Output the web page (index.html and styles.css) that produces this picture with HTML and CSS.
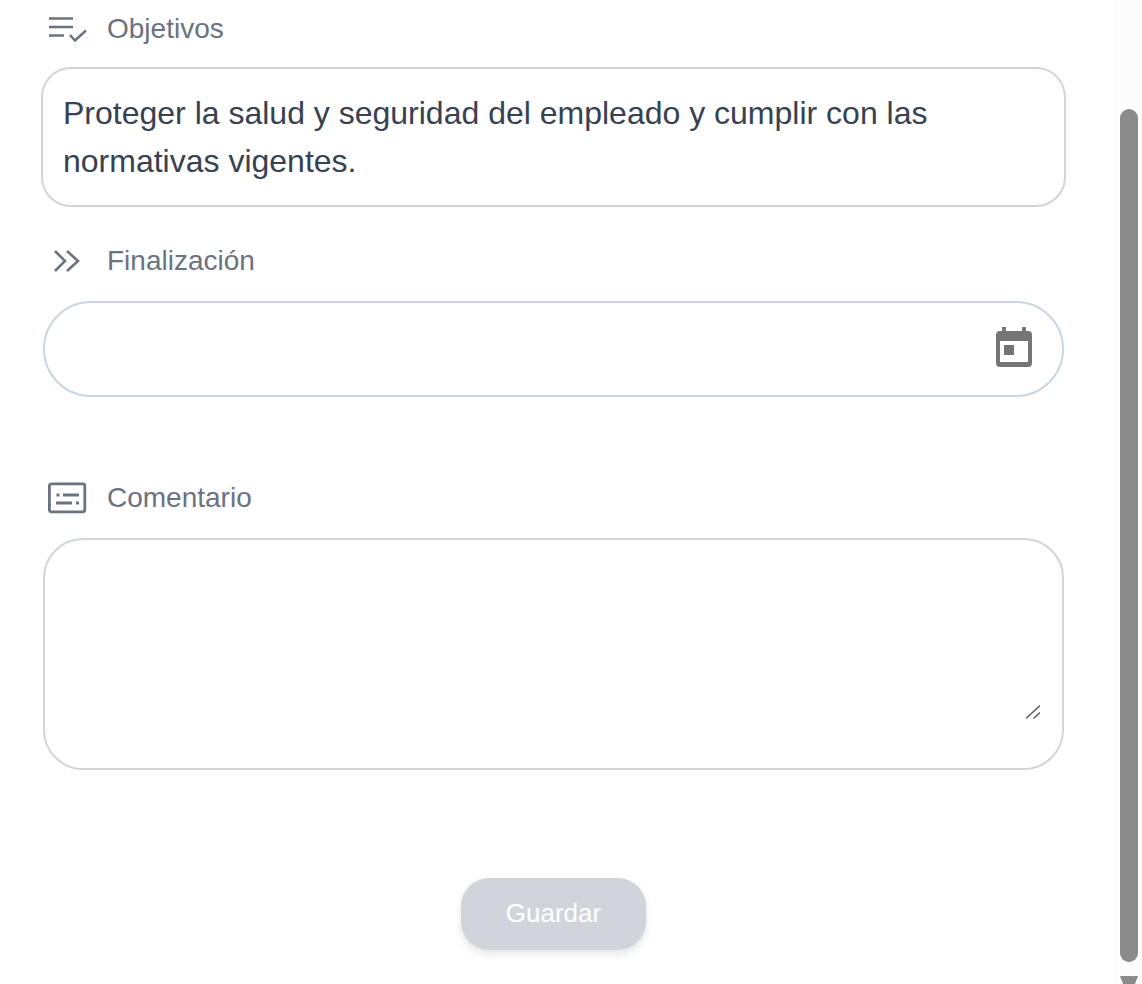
FILE: index.html
```html
<!DOCTYPE html>
<html lang="es">
<head>
    <meta charset="UTF-8">
    <meta name="viewport" content="width=device-width, initial-scale=1.0">
    <title>Objetivos</title>
    <link rel="stylesheet" href="styles.css">
</head>
<body>
    <div class="page">
        <form class="form">
            <div class="form-label label-objetivos">
                <svg class="label-icon" width="40" height="44" viewBox="0 0 40 44" fill="none" stroke="#6b7280" stroke-width="2.6">
                    <path d="M1 11.5H25M1 20H25M1 28.5H16"/>
                    <path d="M22 28L27 33.5L38 23.5"/>
                </svg>
                <span>Objetivos</span>
            </div>
            <textarea class="objetivos-box" rows="2" readonly>Proteger la salud y seguridad del empleado y cumplir con las normativas vigentes.</textarea>

            <div class="form-label label-finalizacion">
                <svg class="label-icon" width="40" height="30" viewBox="0 0 40 30" fill="none" stroke="#6b7280" stroke-width="2.6">
                    <path d="M7 5L17 15L7 25"/>
                    <path d="M19 5L30 15L19 25"/>
                </svg>
                <span>Finalización</span>
            </div>
            <div class="date-box">
                <input class="date-input" type="text">
                <svg class="date-icon" width="36" height="40" viewBox="0 0 36 40">
                    <path fill="#757575" fill-rule="evenodd" d="M6 0H10V4H26V0H30V4H32A4 4 0 0 1 36 8V36A4 4 0 0 1 32 40H4A4 4 0 0 1 0 36V8A4 4 0 0 1 4 4H6ZM4 14V35H32V14ZM8 18H18V28H8Z"/>
                </svg>
            </div>

            <div class="form-label label-comentario">
                <svg class="label-icon" width="40" height="34" viewBox="0 0 40 34" fill="none" stroke="#6b7280" stroke-width="2.8">
                    <rect x="1.4" y="2.8" width="35.4" height="28" rx="2"/>
                    <path d="M8.5 14H11.5M15 14H31M8 22H24M28 22H31"/>
                </svg>
                <span>Comentario</span>
            </div>
            <div class="comment-box">
                <textarea class="comment-input"></textarea>
                <svg class="comment-grip" width="14" height="14" viewBox="0 0 14 14" fill="none" stroke="#555" stroke-width="1.3">
                    <path d="M0 13.5L14 0.5M7.5 13.5L14 7.5"/>
                </svg>
            </div>

            <div class="form-actions">
                <button type="button" class="save-btn">Guardar</button>
            </div>
        </form>

        <div class="scrollbar">
            <div class="scrollbar-thumb"></div>
            <div class="scrollbar-arrow"></div>
        </div>
    </div>
</body>
</html>
```

FILE: styles.css
```css
* {
    margin: 0;
    padding: 0;
    box-sizing: border-box;
    font-family: "Liberation Sans", Arial, sans-serif;
}

html, body {
    height: 100%;
    overflow: hidden;
    background: white;
}

.page {
    display: flex;
    height: 984px;
}

.form {
    flex: 1;
    padding-left: 43px;
}

.form-label {
    display: flex;
    align-items: center;
    gap: 19px;
    padding-left: 5px;
    color: #6b7280;
    font-size: 28px;
}

.label-icon {
    flex: none;
}

.label-objetivos {
    height: 58px;
    margin-bottom: 9px;
}

.label-finalizacion {
    height: 30px;
    margin-top: 39px;
    margin-bottom: 25px;
}

.label-comentario {
    height: 36px;
    margin-top: 83px;
    margin-bottom: 22px;
}

.objetivos-box {
    display: block;
    width: 1025px;
    height: 140px;
    margin-left: -2px;
    padding: 20px 20px;
    border: 2px solid #d1d5db;
    border-radius: 30px;
    outline: none;
    resize: none;
    overflow: hidden;
    color: #374151;
    font-size: 32px;
    line-height: 48px;
}

.date-box {
    display: flex;
    align-items: center;
    width: 1021px;
    height: 96px;
    padding: 0 30px 0 24px;
    border: 2px solid #cbd5e1;
    border-radius: 48px;
}

.date-input {
    flex: 1;
    border: none;
    outline: none;
    font-size: 32px;
}

.date-icon {
    margin-bottom: 4px;
}

.comment-box {
    position: relative;
    width: 1021px;
    height: 232px;
    padding: 20px 20px 47px 20px;
    border: 2px solid #d1d5db;
    border-radius: 40px;
}

.comment-input {
    display: block;
    width: 100%;
    height: 100%;
    border: none;
    outline: none;
    resize: none;
    font-size: 32px;
}

.comment-grip {
    position: absolute;
    right: 22px;
    bottom: 49px;
}

.form-actions {
    display: flex;
    justify-content: center;
    width: 1021px;
    margin-top: 108px;
}

.save-btn {
    width: 185px;
    height: 72px;
    padding-bottom: 2px;
    border: none;
    border-radius: 28px;
    background: #d1d5db;
    box-shadow: 0 4px 8px rgba(0, 0, 0, 0.1);
    color: white;
    font-size: 26px;
}

.scrollbar {
    flex: none;
    display: flex;
    flex-direction: column;
    align-items: center;
    width: 28px;
    padding-top: 109px;
    padding-left: 2px;
    background: #fcfcfc;
}

.scrollbar-thumb {
    flex: none;
    width: 18px;
    height: 853px;
    border-radius: 9px;
    background: #8b8b8b;
}

.scrollbar-arrow {
    flex: none;
    width: 18px;
    height: 8px;
    margin-top: 14px;
    background: #8b8b8b;
    clip-path: polygon(0 0, 100% 0, 83% 100%, 17% 100%);
}
```
